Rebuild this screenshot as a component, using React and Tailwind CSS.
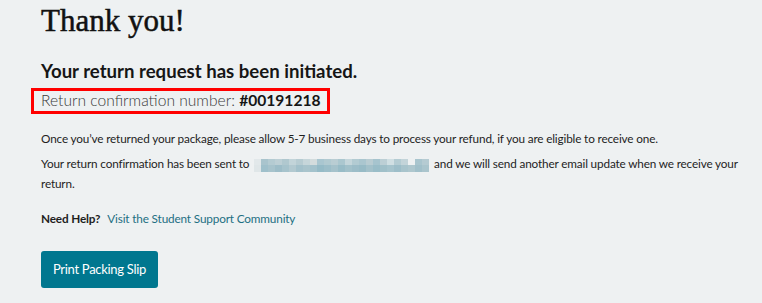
import React from "react";

const top = ["#e2e8ea","#a9c4cd","#b4cbd2","#bccfd5","#b0c8cf","#c2d4d9","#b7ccd2","#c6d6da","#d3dcdd","#a9c6d0","#b1cad1","#b9cdd3","#abc7cf","#c4d6db","#b2cbd2","#aac6cf","#b8ccd2","#a6c4ce","#bccfd5","#d0dfe3","#b4ccd3","#c3d4d9","#eef1f2","#a9c5ce","#b5cbd2"];
const bot = ["#dfe6e8","#9fc0cb","#a7c3cc","#9dbdc8","#a6c3cc","#b2c9d0","#a3c1cb","#a9c4cc","#a3c2cc","#95bbc7","#9cbec9","#a5c2cb","#98bcc7","#a2c1ca","#9cbdc8","#97bbc6","#a3c1ca","#99bdc8","#a0c0c9","#a6c4cd","#9dbec9","#a8c4cc","#aec7ce","#a1c0ca","#aac5cd"];

export default function App() {
  return (
    <div className="w-[762px] h-[303px] bg-[#eef1f2] text-[#1e1e1e] overflow-hidden" style={{ fontFamily: "Lato, 'Open Sans', sans-serif" }}>
      <div className="pl-[41px] pt-[1px]">
        <h1 className="text-[31px] leading-[40px] font-normal text-[#111] [-webkit-text-stroke:0.5px_#111]" style={{ fontFamily: "'Liberation Serif', serif" }}>Thank you!</h1>
        <h2 className="mt-[18px] text-[18.6px] leading-[24px] font-bold text-[#161616]">Your return request has been initiated.</h2>
        <div className="mt-[5px] -ml-[10px] inline-flex items-center h-[26px] border-[3px] border-[#ff0000] pl-[7px] pr-[6px] text-[15.6px]">
          <span className="font-light text-[#3a3a3a]">Return confirmation number:&nbsp;</span>
          <span className="font-bold text-[#161616]">#00191218</span>
        </div>
        <div className="w-[705px] text-[11.75px] tracking-[-0.15px] leading-[20px]">
          <p className="mt-[15px]">Once you’ve returned your package, please allow 5-7 business days to process your refund, if you are eligible to receive one.</p>
          <p className="mt-[5px]">
            <span>Your return confirmation has been sent to </span>
            <span className="inline-flex flex-col align-middle mx-[2px]">
              <span className="flex">{top.map((c, i) => <span key={i} className="w-[7px] h-[6px]" style={{ background: c }} />)}</span>
              <span className="flex">{bot.map((c, i) => <span key={i} className="w-[7px] h-[7px]" style={{ background: c }} />)}</span>
            </span>
            <span> and we will send another email update when we receive your return.</span>
          </p>
          <p className="mt-[15px]">
            <span className="font-bold">Need Help?</span>
            <span className="ml-[7px] text-[#1d6f82]">Visit the Student Support Community</span>
          </p>
        </div>
        <button className="mt-[22px] w-[117px] h-[37px] rounded-[3px] bg-[#00778f] text-white text-[13px] tracking-[-0.3px]">Print Packing Slip</button>
      </div>
    </div>
  );
}
